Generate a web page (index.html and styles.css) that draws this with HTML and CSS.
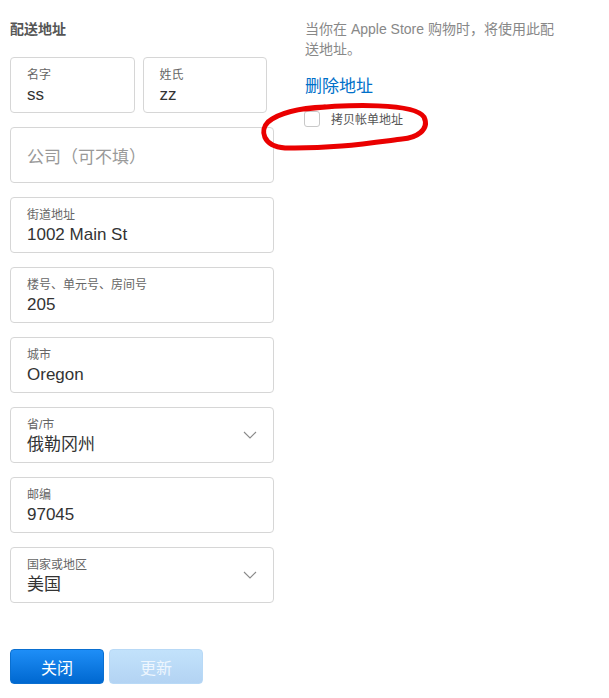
FILE: index.html
```html
<!DOCTYPE html>
<html lang="zh-CN">
<head>
<meta charset="utf-8">
<link rel="stylesheet" href="styles.css">
</head>
<body>
<div class="page">
  <div class="left">
    <h2 class="title">配送地址</h2>
    <div class="form">
      <div class="row">
        <div class="field"><div class="lbl">名字</div><div class="val">ss</div></div>
        <div class="field"><div class="lbl">姓氏</div><div class="val">zz</div></div>
      </div>
      <div class="field placeholder"><div class="ph">公司（可不填）</div></div>
      <div class="field"><div class="lbl">街道地址</div><div class="val">1002 Main St</div></div>
      <div class="field"><div class="lbl">楼号、单元号、房间号</div><div class="val">205</div></div>
      <div class="field"><div class="lbl">城市</div><div class="val">Oregon</div></div>
      <div class="field select"><div class="txt"><div class="lbl">省/市</div><div class="val">俄勒冈州</div></div>
        <svg class="chev" width="14" height="8" viewBox="0 0 14 8"><path d="M1 1 L7 7 L13 1" fill="none" stroke="#8a8a8a" stroke-width="1.1"/></svg></div>
      <div class="field"><div class="lbl">邮编</div><div class="val">97045</div></div>
      <div class="field select"><div class="txt"><div class="lbl">国家或地区</div><div class="val">美国</div></div>
        <svg class="chev" width="14" height="8" viewBox="0 0 14 8"><path d="M1 1 L7 7 L13 1" fill="none" stroke="#8a8a8a" stroke-width="1.1"/></svg></div>
    </div>
    <div class="buttons">
      <button class="btn primary">关闭</button>
      <button class="btn disabled">更新</button>
    </div>
  </div>
  <div class="right">
    <p class="note">当你在 Apple Store 购物时，将使用此配送地址。</p>
    <a class="del">删除地址</a>
    <label class="check"><span class="box"></span><span>拷贝帐单地址</span></label>
  </div>
</div>
<svg class="circle" width="609" height="698" viewBox="0 0 609 698">
  <path d="M305 109 C350 104 415 103 424 117 C430 130 416 138 402 139 C370 143 330 149 285 148 C262 146 260 130 268 122 C280 112 300 108 325 107" fill="none" stroke="#ea0000" stroke-width="5" stroke-linecap="round"/>
</svg>
</body>
</html>
```
FILE: styles.css
```css
* { box-sizing: border-box; }
html, body { margin: 0; padding: 0; background: #fff; }
body {
  font-family: "Liberation Sans", "Noto Sans CJK SC", sans-serif;
  color: #333;
  position: relative;
  width: 609px;
  height: 698px;
  overflow: hidden;
}
.page {
  display: flex;
  padding: 0 0 0 10px;
  gap: 31px;
}
.left { width: 264px; }
.title {
  margin: 18px 0 17px;
  font-size: 14px;
  line-height: 22px;
  font-weight: 600;
  color: #555;
}
.form { display: flex; flex-direction: column; gap: 14px; }
.row { display: flex; gap: 8px; width: 257px; }
.row .field { flex: 1; }
.field {
  height: 56px;
  border: 1px solid #d6d6d6;
  border-radius: 4px;
  padding: 10px 16px 0;
}
.lbl { font-size: 12px; line-height: 14px; color: #666; }
.val { font-size: 17px; line-height: 18px; color: #333; margin-top: 4px; }
.placeholder { display: flex; align-items: center; padding-top: 0; }
.ph { font-size: 17px; color: #999; }
.select { display: flex; justify-content: space-between; align-items: center; padding-top: 0; padding-right: 16px; }
.select .txt { align-self: flex-start; padding-top: 10px; }
.buttons { display: flex; gap: 5px; margin-top: 46px; }
.btn {
  width: 94px;
  height: 35px;
  border-radius: 4px;
  font-family: "Noto Sans CJK SC", sans-serif;
  font-size: 16px;
  color: #fff;
  padding: 0;
}
.primary {
  background: linear-gradient(#1e8ef7, #0068d0);
  border: 1px solid #0a6fd0;
}
.disabled {
  background: linear-gradient(#c2e2fb, #b3d3f3);
  border: 1px solid #b8d9f6;
  color: #eef6fe;
}
.right { width: 262px; padding-top: 19px; }
.note {
  margin: 0;
  font-size: 14px;
  line-height: 20px;
  color: #888;
}
.del {
  display: block;
  margin-top: 15px;
  font-size: 17px;
  line-height: 22px;
  color: #0070c9;
  font-family: "Noto Sans CJK SC", sans-serif;
}
.check {
  display: flex;
  align-items: center;
  gap: 11px;
  margin-top: 14px;
  font-size: 12px;
  color: #555;
  margin-left: -1px;
}
.box {
  width: 16px;
  height: 16px;
  border: 1px solid #c8c8c8;
  border-radius: 3px;
  background: #fff;
}
.circle { position: absolute; left: 0; top: 0; pointer-events: none; }
```
